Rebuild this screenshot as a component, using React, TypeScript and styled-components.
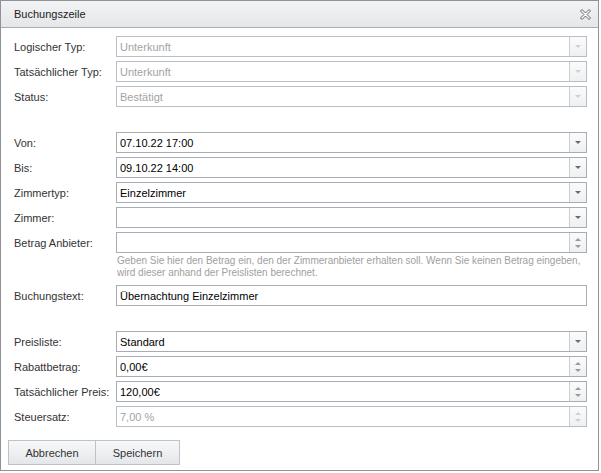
import React from "react";
import styled, { createGlobalStyle } from "styled-components";

const GlobalStyle = createGlobalStyle`
  html, body {
    margin: 0;
    padding: 0;
    background: #ffffff;
  }
  body {
    font-family: "Liberation Sans", Arial, sans-serif;
    font-size: 11px;
  }
`;

type FieldKind = "combo" | "spin" | "text";

type Field = {
  label: string;
  value: string;
  kind: FieldKind;
  disabled?: boolean;
};

const topFields: Field[] = [
  { label: "Logischer Typ:", value: "Unterkunft", kind: "combo", disabled: true },
  { label: "Tatsächlicher Typ:", value: "Unterkunft", kind: "combo", disabled: true },
  { label: "Status:", value: "Bestätigt", kind: "combo", disabled: true },
];

const stayFields: Field[] = [
  { label: "Von:", value: "07.10.22 17:00", kind: "combo" },
  { label: "Bis:", value: "09.10.22 14:00", kind: "combo" },
  { label: "Zimmertyp:", value: "Einzelzimmer", kind: "combo" },
  { label: "Zimmer:", value: "", kind: "combo" },
  { label: "Betrag Anbieter:", value: "", kind: "spin" },
];

const priceFields: Field[] = [
  { label: "Preisliste:", value: "Standard", kind: "combo" },
  { label: "Rabattbetrag:", value: "0,00€", kind: "spin" },
  { label: "Tatsächlicher Preis:", value: "120,00€", kind: "spin" },
  { label: "Steuersatz:", value: "7,00 %", kind: "spin", disabled: true },
];

const Window = styled.div`
  width: 599px;
  height: 471px;
  box-sizing: border-box;
  border: 1px solid #8f9296;
  display: flex;
  flex-direction: column;
  background: #ffffff;
`;

const Header = styled.div`
  height: 26px;
  display: flex;
  align-items: center;
  justify-content: space-between;
  padding: 0 7px 0 13px;
  background: linear-gradient(#f2f3f4, #e4e6e8);
  border-bottom: 1px solid #a9acb0;
  color: #222;
`;

const Title = styled.span`
  font-size: 11px;
`;

const CloseTool = styled.div`
  width: 12px;
  height: 12px;
  display: flex;
  align-items: center;
  justify-content: center;
  margin-top: 1px;
`;

const Body = styled.div`
  padding: 8px 11px 0 13px;
  display: flex;
  flex-direction: column;
`;

const Row = styled.div`
  display: flex;
  align-items: center;
  height: 21px;
  margin-bottom: 4px;
`;

const Label = styled.div`
  width: 102px;
  color: #333;
  font-size: 11px;
  white-space: nowrap;
`;

const Box = styled.div<{ $disabled?: boolean }>`
  flex: 1;
  height: 21px;
  box-sizing: border-box;
  display: flex;
  border: 1px solid ${p => (p.$disabled ? "#b7bec5" : "#a6adb5")};
  background: #ffffff;
`;

const Value = styled.div<{ $disabled?: boolean }>`
  flex: 1;
  display: flex;
  align-items: center;
  padding-left: 3px;
  color: ${p => (p.$disabled ? "#a3a3a3" : "#000")};
  font-size: 11px;
`;

const Trigger = styled.div`
  width: 16px;
  border-left: 1px solid #c9ced3;
  background: linear-gradient(#fbfbfc, #eef0f2);
  display: flex;
  flex-direction: column;
  align-items: center;
  justify-content: center;
  gap: 4px;
`;

const Arrow = styled.div<{ $up?: boolean; $disabled?: boolean; $light?: boolean }>`
  width: 0;
  height: 0;
  border-left: 3px solid transparent;
  border-right: 3px solid transparent;
  ${p => (p.$up ? "border-bottom" : "border-top")}: 3px solid
    ${p => (p.$disabled ? "#cfcfcf" : p.$light ? "#9a9a9a" : "#6a6a6a")};
`;

const Spacer = styled.div`
  height: 21px;
`;

const Help = styled.div`
  margin: -2px 0 4px 103px;
  padding-bottom: 2px;
  color: #a0a0a0;
  font-size: 10px;
  line-height: 12px;
`;

const Footer = styled.div`
  display: flex;
  padding: 9px 7px 5px;
`;

const Button = styled.button<{ $width: number }>`
  width: ${p => p.$width}px;
  height: 25px;
  margin: 0 -1px 0 0;
  border: 1px solid #bfc3c7;
  background: linear-gradient(#f7f8f9, #e4e7ea);
  color: #333;
  font-family: "Liberation Sans", Arial, sans-serif;
  font-size: 11px;
  padding: 0;
`;

const CloseIcon = () => (
  <svg width="11" height="11" viewBox="0 0 11 11">
    <polygon
      points="0.5,2 2,0.5 5.5,4 9,0.5 10.5,2 7,5.5 10.5,9 9,10.5 5.5,7 2,10.5 0.5,9 4,5.5"
      fill="#ffffff"
      stroke="#5f6266"
      strokeWidth="1"
    />
  </svg>
);

const FieldRow = ({ field }: { field: Field }) => (
  <Row>
    <Label>{field.label}</Label>
    <Box $disabled={field.disabled}>
      <Value $disabled={field.disabled}>{field.value}</Value>
      {field.kind === "combo" && (
        <Trigger>
          <Arrow $disabled={field.disabled} />
        </Trigger>
      )}
      {field.kind === "spin" && (
        <Trigger>
          <Arrow $up $light $disabled={field.disabled} />
          <Arrow $light $disabled={field.disabled} />
        </Trigger>
      )}
    </Box>
  </Row>
);

export default function App() {
  return (
    <>
      <GlobalStyle />
      <Window>
        <Header>
          <Title>Buchungszeile</Title>
          <CloseTool>
            <CloseIcon />
          </CloseTool>
        </Header>
        <Body>
          {topFields.map((f, i) => (
            <FieldRow field={f} key={i} />
          ))}
          <Spacer />
          {stayFields.map((f, i) => (
            <FieldRow field={f} key={i} />
          ))}
          <Help>
            Geben Sie hier den Betrag ein, den der Zimmeranbieter erhalten soll. Wenn Sie keinen Betrag eingeben,
            <br />
            wird dieser anhand der Preislisten berechnet.
          </Help>
          <FieldRow field={{ label: "Buchungstext:", value: "Übernachtung Einzelzimmer", kind: "text" }} />
          <Spacer />
          {priceFields.map((f, i) => (
            <FieldRow field={f} key={i} />
          ))}
        </Body>
        <Footer>
          <Button $width={88}>Abbrechen</Button>
          <Button $width={85}>Speichern</Button>
        </Footer>
      </Window>
    </>
  );
}
